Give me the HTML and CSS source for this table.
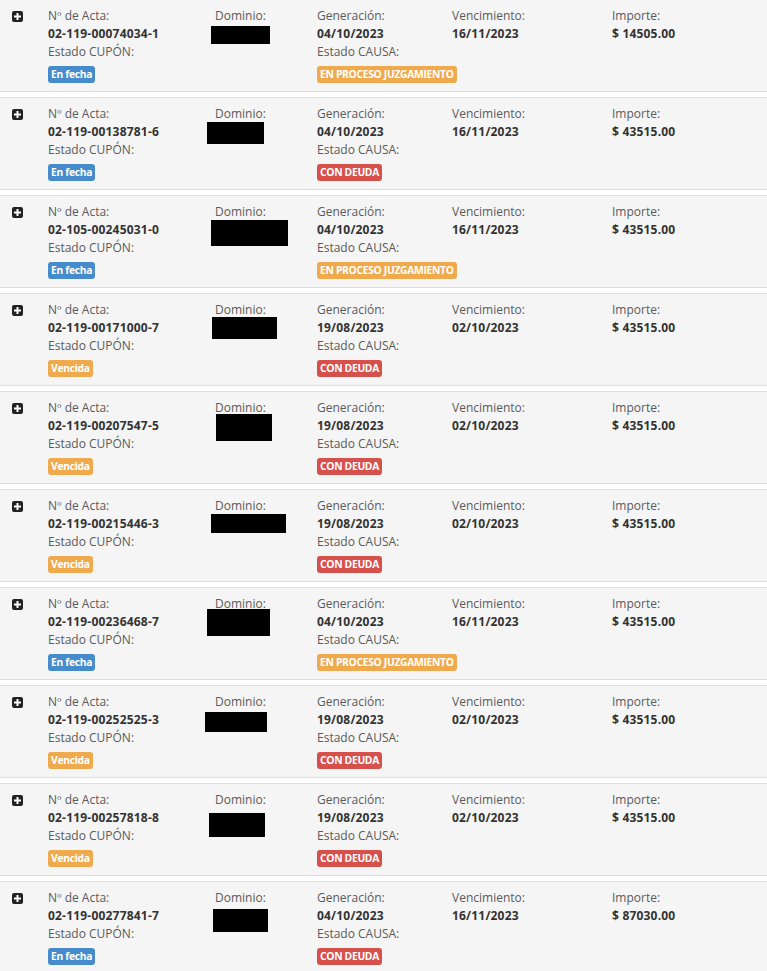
FILE: index.html
```html
<!DOCTYPE html>
<html lang="es">
<head>
  <meta charset="UTF-8">
  <meta name="viewport" content="width=device-width, initial-scale=1.0">
  <title>Actas</title>
  <link rel="stylesheet" href="styles.css">
</head>
<body>
  <section class="actas" id="actas"></section>
  <script>
    const actas = [
      { nro: "02-119-00074034-1", gen: "04/10/2023", venc: "16/11/2023", imp: "14505.00", cupon: "fecha", causa: "proceso", box: [-4, 19, 59, 18] },
      { nro: "02-119-00138781-6", gen: "04/10/2023", venc: "16/11/2023", imp: "43515.00", cupon: "fecha", causa: "deuda", box: [-8, 17, 57, 22] },
      { nro: "02-105-00245031-0", gen: "04/10/2023", venc: "16/11/2023", imp: "43515.00", cupon: "fecha", causa: "proceso", box: [-4, 17, 77, 26] },
      { nro: "02-119-00171000-7", gen: "19/08/2023", venc: "02/10/2023", imp: "43515.00", cupon: "vencida", causa: "deuda", box: [-3, 16, 65, 22] },
      { nro: "02-119-00207547-5", gen: "19/08/2023", venc: "02/10/2023", imp: "43515.00", cupon: "vencida", causa: "deuda", box: [1, 15, 56, 27] },
      { nro: "02-119-00215446-3", gen: "19/08/2023", venc: "02/10/2023", imp: "43515.00", cupon: "vencida", causa: "deuda", box: [-4, 17, 75, 19] },
      { nro: "02-119-00236468-7", gen: "04/10/2023", venc: "16/11/2023", imp: "43515.00", cupon: "fecha", causa: "proceso", box: [-8, 14, 63, 27] },
      { nro: "02-119-00252525-3", gen: "19/08/2023", venc: "02/10/2023", imp: "43515.00", cupon: "vencida", causa: "deuda", box: [-10, 19, 62, 20] },
      { nro: "02-119-00257818-8", gen: "19/08/2023", venc: "02/10/2023", imp: "43515.00", cupon: "vencida", causa: "deuda", box: [-6, 22, 56, 24] },
      { nro: "02-119-00277841-7", gen: "04/10/2023", venc: "16/11/2023", imp: "87030.00", cupon: "fecha", causa: "deuda", box: [-2, 20, 55, 23] }
    ];

    const cupones = {
      fecha: '<span class="badge badge-blue">En fecha</span>',
      vencida: '<span class="badge badge-orange">Vencida</span>'
    };
    const causas = {
      proceso: '<span class="badge badge-orange">EN PROCESO JUZGAMIENTO</span>',
      deuda: '<span class="badge badge-red">CON DEUDA</span>'
    };

    const plusIcon = `
      <svg width="11" height="11" viewBox="0 0 11 11">
        <rect x="0" y="0" width="11" height="11" rx="2" fill="#222"/>
        <rect x="4.5" y="2" width="2" height="7" fill="#fff"/>
        <rect x="2" y="4.5" width="7" height="2" fill="#fff"/>
      </svg>`;

    function renderActas() {
      const container = document.getElementById('actas');
      actas.forEach(a => {
        const row = document.createElement('div');
        row.className = 'acta';
        const [l, t, w, h] = a.box;
        row.innerHTML = `
          <div class="toggle">${plusIcon}</div>
          <div class="col">
            <div class="label">Nº de Acta:</div>
            <div class="value">${a.nro}</div>
            <div class="label">Estado CUPÓN:</div>
            <div class="badge-line">${cupones[a.cupon]}</div>
          </div>
          <div class="col dominio">
            <div class="label">Dominio:</div>
            <div class="redacted" style="left:${l}px;top:${t}px;width:${w}px;height:${h}px"></div>
          </div>
          <div class="col">
            <div class="label">Generación:</div>
            <div class="value">${a.gen}</div>
            <div class="label">Estado CAUSA:</div>
            <div class="badge-line">${causas[a.causa]}</div>
          </div>
          <div class="col">
            <div class="label">Vencimiento:</div>
            <div class="value">${a.venc}</div>
          </div>
          <div class="col">
            <div class="label">Importe:</div>
            <div class="value">$ ${a.imp}</div>
          </div>
        `;
        container.appendChild(row);
      });
    }

    renderActas();
  </script>
</body>
</html>
```

FILE: styles.css
```css
body {
  margin: 0;
  background: #fff;
  font-family: "Open Sans", Arial, sans-serif;
  font-size: 12px;
  color: #5a5a5a;
}
.actas {
  margin-top: -1px;
}
.acta {
  display: grid;
  grid-template-columns: 48px 167px 102px 135px 160px 1fr;
  background: #f5f5f5;
  border-top: 1px solid #dedede;
  border-bottom: 1px solid #dedede;
  padding: 7px 0 8px;
  margin-bottom: 5px;
  height: 76px;
}
.toggle {
  padding: 4px 0 0 12px;
}
.toggle svg {
  display: block;
}
.col {
  line-height: 18px;
}
.dominio {
  position: relative;
}
.label {
  color: #5a5a5a;
}
.value {
  color: #333;
  font-weight: bold;
  letter-spacing: 0.2px;
}
.redacted {
  position: absolute;
  background: #000;
}
.badge-line {
  margin-top: 4px;
  line-height: 17px;
  white-space: nowrap;
}
.badge {
  display: inline-block;
  height: 17px;
  padding: 0 3px;
  border-radius: 3px;
  color: #fff;
  font-size: 10.3px;
  font-weight: bold;
  line-height: 17px;
  letter-spacing: -0.3px;
}
.badge-blue {
  background: #468bcc;
}
.badge-orange {
  background: #efaa4d;
}
.badge-red {
  background: #d6504c;
}
```
